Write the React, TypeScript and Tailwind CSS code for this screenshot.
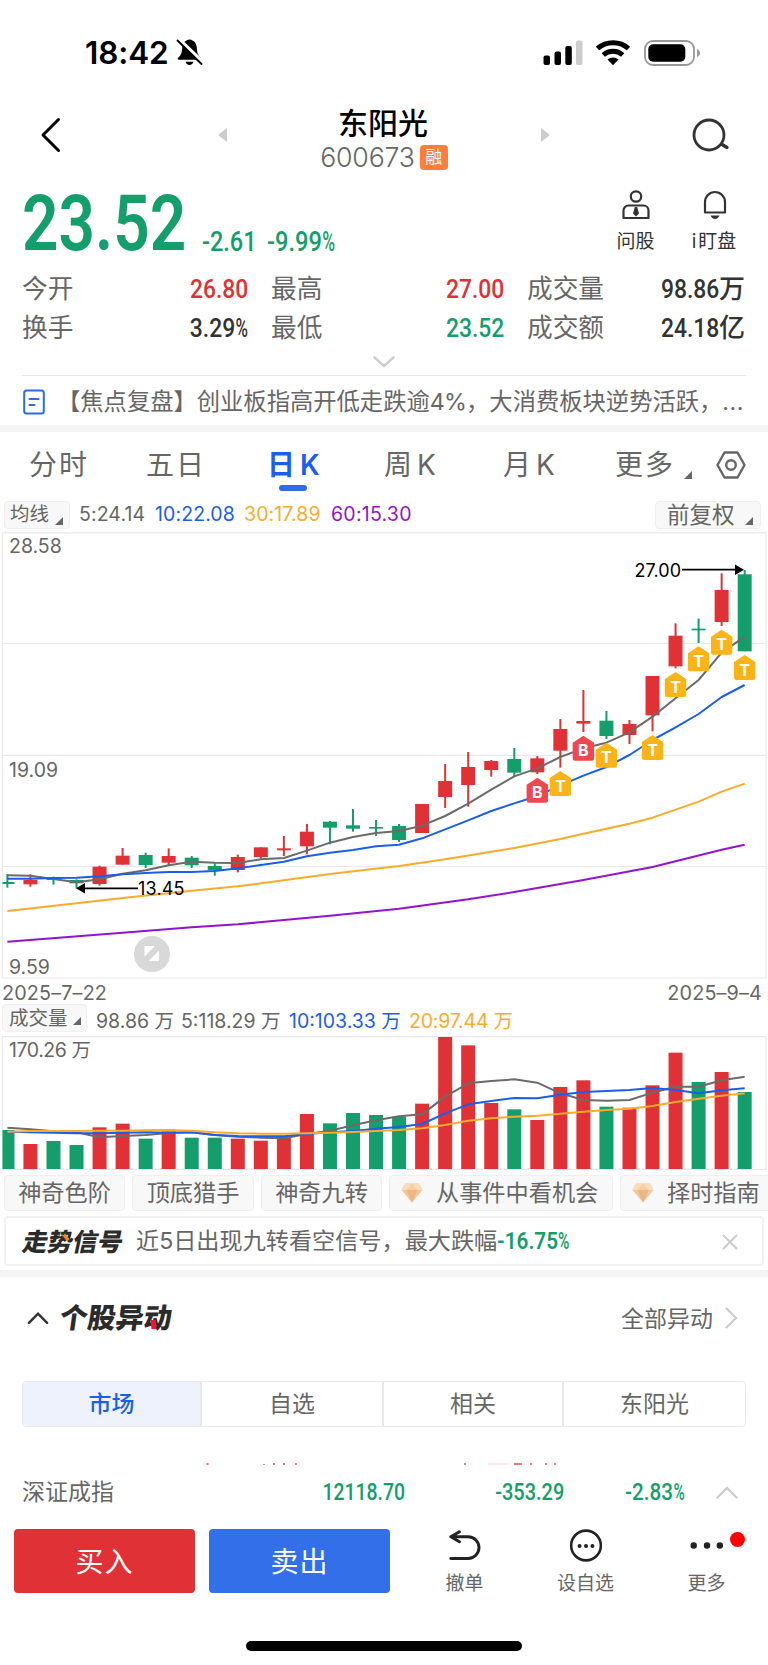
import React from 'react';

const UP = '#e03136';
const DOWN = '#149e6b';

// [color, high, top, bottom, low]
const candles: [string, number, number, number, number][] = [
  [DOWN, 1062, 1086, 1092, 1103],
  [UP, 1063, 1080, 1093, 1100],
  [DOWN, 1070, 1075, 1080, 1094],
  [DOWN, 1078, 1080, 1090, 1105],
  [UP, 1037, 1040, 1092, 1097],
  [UP, 984, 1007, 1034, 1034],
  [DOWN, 998, 1005, 1035, 1044],
  [UP, 985, 1008, 1028, 1035],
  [DOWN, 1008, 1013, 1036, 1044],
  [DOWN, 1030, 1038, 1051, 1067],
  [UP, 1004, 1011, 1050, 1057],
  [UP, 982, 982, 1011, 1017],
  [UP, 948, 985, 991, 1008],
  [UP, 912, 935, 979, 1003],
  [DOWN, 903, 905, 923, 973],
  [DOWN, 867, 916, 926, 935],
  [DOWN, 900, 921, 926, 948],
  [DOWN, 912, 918, 960, 966],
  [UP, 852, 852, 939, 939],
  [UP, 732, 783, 831, 864],
  [UP, 696, 741, 795, 860],
  [UP, 720, 723, 750, 770],
  [DOWN, 684, 717, 758, 768],
  [UP, 708, 715, 757, 762],
  [UP, 597, 627, 692, 743],
  [UP, 510, 603, 611, 636],
  [DOWN, 573, 602, 648, 657],
  [UP, 600, 612, 645, 672],
  [UP, 468, 468, 586, 634],
  [UP, 310, 347, 439, 445],
  [DOWN, 296, 326, 331, 369],
  [UP, 160, 210, 306, 318],
  [DOWN, 150, 163, 394, 394],
];

const volumes = [
  480, 522, 513, 525, 472, 461, 506, 484, 503, 503, 506, 512, 500, 432, 460, 429, 435, 440, 401, 201, 226, 399, 418,
  450, 351, 331, 410, 413, 346, 248, 336, 306, 366,
];

const ma5 = [
  1066, 1067, 1077, 1087, 1078, 1061, 1051, 1036, 1025, 1028, 1029, 1018, 1014, 992, 968, 951, 939, 933, 917, 888, 851,
  809, 769, 745, 711, 685, 668, 637, 590, 535, 480, 398, 350,
];
const ma10 = [
  1076, 1076, 1074, 1073, 1069, 1063, 1059, 1056, 1056, 1053, 1045, 1035, 1025, 1009, 998, 990, 979, 974, 955, 928, 901,
  873, 850, 828, 796, 767, 741, 705, 660, 622, 582, 531, 495,
];
const ma30: [number, number][] = [
  [0, 1173], [3, 1150], [5, 1134], [8, 1112], [10, 1099], [12, 1081], [14, 1062], [17, 1038], [19, 1018], [21, 995],
  [22, 984], [24, 957], [25, 941], [27, 911], [28, 893], [30, 845], [31, 815], [32, 791],
];
const ma60: [number, number][] = [
  [0, 1265], [5, 1238], [8, 1222], [10, 1213], [12, 1200], [14, 1187], [17, 1166], [20, 1138], [22, 1116], [25, 1080],
  [28, 1041], [31, 989], [32, 974],
];

const vol5 = [
  473, 478, 484, 487, 502, 498, 495, 489, 487, 495, 500, 503, 505, 492, 482, 466, 451, 439, 433, 380, 340, 333, 328, 338,
  370, 390, 392, 390, 368, 350, 350, 331, 320,
];
const vol10 = [
  485, 487, 488, 490, 490, 488, 487, 488, 487, 495, 498, 499, 499, 492, 487, 483, 476, 471, 462, 430, 403, 393, 384, 385,
  374, 366, 363, 360, 354, 360, 370, 361, 355,
];
const vol20 = [
  485, 483, 483, 483, 482, 482, 481, 480, 482, 487, 490, 491, 491, 490, 488, 486, 483, 480, 475, 465, 452, 445, 440, 437,
  431, 425, 420, 416, 408, 396, 386, 377, 370,
];

// [candle index, letter, top]
const markers: [number, string, number][] = [
  [23, 'B', 773],
  [24, 'T', 753],
  [25, 'B', 647],
  [26, 'T', 668],
  [28, 'T', 645],
  [29, 'T', 456],
  [30, 'T', 379],
  [31, 'T', 329],
  [32, 'T', 405],
];

const cx = (i: number) => 7.4 + 23.04 * i;
const py = (v: number) => v / 3 - 12;
const vy = (v: number) => v / 3 - 66;

const linePoints = (data: number[], y: (v: number) => number) => data.map((v, i) => `${cx(i)},${y(v)}`).join(' ');
const pairPoints = (data: [number, number][]) => data.map(([i, v]) => `${cx(i)},${py(v)}`).join(' ');

const Corner: React.FC<{ className?: string }> = ({ className = '' }) => (
  <svg className={className} width="8" height="8" viewBox="0 0 8 8">
    <path d="M8 0V8H0Z" fill="#666" />
  </svg>
);

// Condensed figures, with an even narrower percent sign
const Num: React.FC<{ value: string; className?: string }> = ({ value, className = '' }) => (
  <span className={`inline-block whitespace-nowrap font-['Roboto',sans-serif] ${className}`}>
    {value.replace('%', '')}
    {value.endsWith('%') && <span className="-mr-[0.2em] inline-block origin-left scale-x-[0.740]">%</span>}
  </span>
);

const StatusBar: React.FC = () => (
  <div className="flex h-[102px] items-center pt-[3px] pl-[85px] pr-[67px]">
    <span className="w-[91px] text-[31.5px] font-semibold leading-none tracking-[-0.1px] text-black">18:42</span>
    <svg width="27" height="28" viewBox="0 0 27 28" className="-mt-[2px]">
      <path d="M13.500 1.500c-4.500.600-7 3.600-7.300 8.300-.2 5-1.300 7.700-4 9.900-.8.700-.5 2.100.7 2.100h21.200c1.200 0 1.500-1.400.7-2.100-2.700-2.200-3.800-4.900-4-9.900-.3-4.700-2.800-7.700-7.300-8.300Z" fill="#000" />
      <path d="M9.500 23.800h8c-.5 2-2 3.200-4 3.200s-3.500-1.200-4-3.200Z" fill="#000" />
      <path d="M2.500 1 27 24.500" stroke="#fff" strokeWidth="4" />
      <path d="M1.500 2.500 25.500 26" stroke="#000" strokeWidth="1.900" strokeLinecap="round" />
    </svg>
    <div className="ml-auto flex items-center">
      <svg width="40" height="26" viewBox="0 0 40 26">
        <rect x="0.500" y="15.500" width="6.500" height="9.500" rx="2" />
        <rect x="11.500" y="11.500" width="6.500" height="13.500" rx="2" />
        <rect x="22.300" y="6" width="6.500" height="19" rx="2" />
        <rect x="33" y="0.500" width="6.500" height="24.500" rx="2" fill="#ccc" />
      </svg>
      <svg className="ml-[12px]" width="36" height="26" viewBox="0 0 36 26" fill="none">
        <path d="M2.500 8.500C11 .8 25 .8 33.500 8.500" stroke="#000" strokeWidth="5" />
        <path d="M8.300 15c5.500-5 13.900-5 19.400 0" stroke="#000" strokeWidth="4.800" />
        <path d="M12.500 19.600c3-2.700 8-2.700 11 0L18 25.200Z" fill="#000" />
      </svg>
      <svg className="ml-[13px]" width="57" height="26" viewBox="0 0 57 26">
        <rect x="1" y="1" width="49" height="24" rx="8" fill="none" stroke="#999" strokeWidth="1.800" />
        <rect x="4.300" y="4.300" width="37" height="17.400" rx="5" />
        <path d="M53 9c4 1.500 4 6.500 0 8Z" fill="#999" />
      </svg>
    </div>
  </div>
);

const Header: React.FC = () => (
  <div className="flex h-[68px] items-start pt-[2px]">
    <svg className="ml-[40px] mt-[13px]" width="22" height="36" viewBox="0 0 22 36" fill="none">
      <path d="M18.500 2.500 3 18 18.500 33.500" stroke="#000" strokeWidth="3" strokeLinecap="round" strokeLinejoin="round" />
    </svg>
    <svg className="ml-[156px] mt-[24px]" width="9" height="14" viewBox="0 0 9 14">
      <path d="M9 0V14L0 7Z" fill="#ccc" />
    </svg>
    <div className="flex w-[314px] flex-col items-center">
      <h1 className="-ml-[2px] text-[30px] font-medium leading-[38px] text-black">东阳光</h1>
      <div className="mt-[1px] flex h-[29px] items-center gap-[5px]">
        <span className="text-[26.700px] font-light leading-none tracking-[-0.2px] text-[#666]">600673</span>
        <span className="flex h-[25px] w-[28px] items-center justify-center rounded-[4px] bg-[#ff7e3e] text-[17px] leading-none text-white">融</span>
      </div>
    </div>
    <svg className="mt-[24px]" width="9" height="14" viewBox="0 0 9 14">
      <path d="M0 0V14L9 7Z" fill="#ccc" />
    </svg>
    <svg className="ml-[142px] mt-[14px]" width="38" height="36" viewBox="0 0 38 36" fill="none">
      <circle cx="17" cy="17" r="15" stroke="#333" strokeWidth="2.800" />
      <path d="M30 26.500 35 29.500" stroke="#333" strokeWidth="3.400" strokeLinecap="round" />
    </svg>
  </div>
);

const Quote: React.FC = () => (
  <div className="flex h-[99px] pl-[22px] text-[#149e6b]">
    <Num value="23.52" className="mt-[14px] w-[180px] origin-left scale-x-[0.830] text-[77px] font-semibold leading-[80px]" />
    <Num value="-2.61" className="mt-[54px] w-[65px] origin-left scale-x-[0.870] text-[27px] font-medium leading-[36px]" />
    <Num value="-9.99%" className="mt-[54px] w-[80px] origin-left scale-x-[0.875] text-[27px] font-medium leading-[36px]" />
    <div className="ml-auto mr-[31px] flex gap-[36px] text-[#333]">
      <div className="flex w-[39px] flex-col items-center pt-[20px]">
        <svg width="28" height="30" viewBox="0 0 28 30" fill="none" stroke="#333" strokeWidth="2.200">
          <circle cx="14" cy="6.500" r="5.200" />
          <path d="M1.500 28V20.500a5 5 0 0 1 5-5h15a5 5 0 0 1 5 5V28Z" strokeLinejoin="round" />
          <path d="M12.800 17h2.400l1.800 6.500L14 26.500l-3-3Z" fill="#333" stroke="none" />
        </svg>
        <span className="mt-[12px] text-[19px] leading-[20px]">问股</span>
      </div>
      <div className="flex w-[46px] flex-col items-center pt-[20px]">
        <svg className="ml-[2px]" width="24" height="30" viewBox="0 0 24 30" fill="none">
          <path d="M2 22.500V12a10 10 0 0 1 20 0v10.500Z" stroke="#333" strokeWidth="2.200" strokeLinejoin="round" />
          <path d="M7.500 25.500h9c-1 2.300-2.500 3.500-4.500 3.500s-3.500-1.200-4.500-3.500Z" fill="#333" />
        </svg>
        <span className="mt-[12px] whitespace-nowrap text-[19px] leading-[20px]">
          <span className="mr-[2px]">i</span>盯盘
        </span>
      </div>
    </div>
  </div>
);

const stats = [
  { label: '今开', value: '26.80', color: 'text-[#e03136]' },
  { label: '最高', value: '27.00', color: 'text-[#e03136]' },
  { label: '成交量', value: '98.86', unit: '万', color: 'text-[#333]' },
  { label: '换手', value: '3.29%', color: 'text-[#333]' },
  { label: '最低', value: '23.52', color: 'text-[#149e6b]' },
  { label: '成交额', value: '24.18', unit: '亿', color: 'text-[#333]' },
];

const Stats: React.FC = () => (
  <div className="grid grid-cols-[226px_233px_218px] gap-x-[23px] pl-[22px]">
    {stats.map((s) => (
      <div key={s.label} className="flex h-[39px] items-center justify-between">
        <span className="text-[25.700px] leading-none text-[#666]">{s.label}</span>
        <span className={`flex items-center font-medium ${s.color}`}>
          <Num value={s.value} className="origin-right scale-x-[0.880] text-[26px] leading-none" />
          {s.unit && <span className="text-[26px] leading-none">{s.unit}</span>}
        </span>
      </div>
    ))}
  </div>
);

const News: React.FC = () => (
  <div className="mx-[22px]">
    <div className="flex h-[28px] items-center justify-center pt-[2px]">
      <svg width="22" height="12" viewBox="0 0 22 12" fill="none">
        <path d="M1.500 1.500 11 10 20.500 1.500" stroke="#ccc" strokeWidth="2.400" strokeLinecap="round" strokeLinejoin="round" />
      </svg>
    </div>
    <div className="h-px bg-[#e8e8e8]" />
    <div className="flex h-[49px] items-center pt-[2px]">
      <svg className="ml-px" width="22" height="26" viewBox="0 0 22 26" fill="none" stroke="#2f6be6" strokeWidth="2">
        <rect x="1.200" y="1.500" width="19.600" height="23" rx="2.500" />
        <path d="M6.500 10h9M6.500 16h5" strokeLinecap="round" />
      </svg>
      <span className="ml-[12px] whitespace-nowrap text-[23.300px] leading-none text-[#666]">
        【焦点复盘】创业板指高开低走跌逾<span className="tracking-[-0.8px]">4%</span>，大消费板块逆势活跃，<span className="tracking-[0.5px]">...</span>
      </span>
    </div>
  </div>
);

const Periods: React.FC = () => (
  <div className="flex h-[64px] items-center pl-[29px] pt-[2px] text-[28px] leading-none tracking-[2px] text-[#666]">
    <span className="w-[117px]">分时</span>
    <span className="w-[121px]">五日</span>
    <span className="relative w-[117px] font-semibold text-[#1a5eec]">
      日<span className="ml-[3px]">K</span>
      <span className="absolute -bottom-[12px] left-[12px] h-[6px] w-[28px] rounded-full bg-[#2f6be6]" />
    </span>
    <span className="w-[119px]">
      周<span className="ml-[3px]">K</span>
    </span>
    <span className="w-[112px]">
      月<span className="ml-[3px]">K</span>
    </span>
    <span>更多</span>
    <Corner className="ml-[9px] mt-[20px]" />
    <svg className="ml-[24px]" width="30" height="28" viewBox="0 0 30 28" fill="none" stroke="#666" strokeWidth="2.400">
      <path d="M8.500 1.500h13L28.500 14l-7 12.500h-13L1.500 14Z" strokeLinejoin="round" />
      <circle cx="15" cy="14" r="4.800" />
    </svg>
  </div>
);

const MaLegend: React.FC = () => (
  <div className="flex h-[36px] items-center pl-[4px] pr-[7px] pt-[1px] text-[19.500px] leading-none text-[#666]">
    <div className="flex h-[28px] w-[66px] items-center rounded-[4px] border border-[#efefef] bg-[#f8f8f8] pl-[5px] pt-[1px]">
      均线
      <Corner className="ml-[6px] mt-[11px]" />
    </div>
    <span className="ml-[9px] w-[76px] pt-[1px] tracking-[0.1px]">5:24.14</span>
    <span className="w-[89px] pt-[1px] tracking-[0.1px] text-[#1a5eec]">10:22.08</span>
    <span className="w-[87px] pt-[1px] tracking-[0.1px] text-[#fbaa2c]">30:17.89</span>
    <span className="pt-[1px] tracking-[0.250px] text-[#9313ce]">60:15.30</span>
    <div className="ml-auto flex h-[28px] w-[106px] items-center rounded-[4px] border border-[#efefef] bg-[#f8f8f8] pl-[11px] pt-[1px] text-[22.500px]">
      前复权
      <Corner className="ml-[10px] mt-[11px]" />
    </div>
  </div>
);

const PriceChart: React.FC = () => (
  <svg className="block overflow-visible" width="768" height="447" viewBox="0 0 768 447" fontFamily="Inter, sans-serif">
    <path d="M2.500 .8H766V446H2.500ZM2.500 111.500H766M2.500 223.300H766M2.500 334.500H766" fill="none" stroke="#e9e9e9" strokeWidth="1.200" />
    <text x="9" y="21" fontSize="19.500" fill="#666">28.58</text>
    <text x="9" y="244.500" fontSize="19.500" fill="#666">19.09</text>
    <text x="9" y="442" fontSize="19.500" fill="#666">9.59</text>
    {candles.map(([color, high, top, bottom, low], i) => (
      <g key={i} fill={color}>
        <rect x={cx(i) - 1} y={py(high)} width="2" height={(low - high) / 3} />
        <rect x={Math.max(cx(i) - 7, 2.5)} y={py(top)} width={i === 0 ? 12 : 14} height={(bottom - top) / 3} />
      </g>
    ))}
    <g fill="none" strokeWidth="2" strokeLinejoin="round">
      <polyline points={linePoints(ma5, py)} stroke="#6b6b6b" />
      <polyline points={linePoints(ma10, py)} stroke="#1a5eec" />
      <polyline points={pairPoints(ma30)} stroke="#fbaa2c" />
      <polyline points={pairPoints(ma60)} stroke="#9313ce" />
    </g>
    {markers.map(([i, letter, top]) => (
      <g key={i} transform={`translate(${cx(i) - 10.7} ${py(top)})`}>
        <path d="M10.700 0 21.400 7V22.500a2.500 2.500 0 0 1-2.500 2.500H2.500A2.500 2.500 0 0 1 0 22.500V7Z" fill={letter === 'B' ? '#ee474f' : '#fbb417'} />
        <text x="10.700" y="20.500" fontSize="16" fontWeight="700" textAnchor="middle" fill="#fff">{letter}</text>
      </g>
    ))}
    <path d="M682 37.700H736M84 356.300H138" stroke="#000" strokeWidth="1.800" />
    <path d="M735 32.500 744 37.700 735 43ZM85 351 76 356.300 85 361.500Z" />
    <text x="634.500" y="44.500" fontSize="18" textLength="46.500">27.00</text>
    <text x="138" y="363" fontSize="18" textLength="46.500">13.45</text>
    <circle cx="152" cy="422" r="18" fill="#d8d8d8" />
    <path d="M144.500 414H155L144.500 424.500ZM159 418.500V429H148.500Z" fill="#fff" />
  </svg>
);

const VolumeChart: React.FC = () => (
  <>
    <div className="flex h-[25px] items-center justify-between pl-[2px] pr-[6px] pt-[4px] text-[19.800px] leading-none tracking-[0.150px] text-[#666]">
      <span>2025–7–22</span>
      <span>2025–9–4</span>
    </div>
    <div className="flex h-[32px] pl-[2px] text-[19.500px] leading-[34px] text-[#666]">
      <div className="flex h-[28px] w-[85px] items-center rounded-[4px] border border-[#efefef] bg-[#f8f8f8] pl-[6px] pt-[1px] leading-none">
        成交量
        <Corner className="ml-[5px] mt-[5px]" />
      </div>
      <span className="ml-[9px] w-[85px] whitespace-nowrap">98.86 万</span>
      <span className="w-[108px] whitespace-nowrap">5:118.29 万</span>
      <span className="w-[120px] whitespace-nowrap text-[#1a5eec]">10:103.33 万</span>
      <span className="whitespace-nowrap tracking-[-0.2px] text-[#fbaa2c]">20:97.44 万</span>
    </div>
    <svg className="block" width="768" height="135" viewBox="0 0 768 135" fontFamily="Inter, 'Noto Sans CJK SC', sans-serif">
      <path d="M2.500 .6H766V133.500H2.500Z" fill="none" stroke="#e9e9e9" strokeWidth="1.200" />
      <text x="9" y="21" fontSize="19.500" fill="#666" textLength="82">170.26 万</text>
      {volumes.map((v, i) => (
        <rect key={i} x={Math.max(cx(i) - 7, 2.5)} y={vy(v)} width={i === 0 ? 12 : 14} height={(597 - v) / 3} fill={candles[i][0]} />
      ))}
      <g fill="none" strokeWidth="2" strokeLinejoin="round">
        <polyline points={linePoints(vol5, vy)} stroke="#6b6b6b" />
        <polyline points={linePoints(vol10, vy)} stroke="#1a5eec" />
        <polyline points={linePoints(vol20, vy)} stroke="#fbaa2c" />
      </g>
    </svg>
  </>
);

const Diamond: React.FC = () => (
  <svg width="22" height="20" viewBox="0 0 22 20">
    <path d="M4 .5h14l3.500 6.500L11 19.500.5 7Z" fill="#f3c698" />
    <path d="M4 .5h14l3.500 6.500H.5Z" fill="#f9dcbc" />
    <path d="M5.500 7h11L11 19.500Z" fill="#edb680" />
    <path d="M5.500 7 11 .5 16.500 7Z" fill="#f6cfa6" />
  </svg>
);

const tools = [
  { name: '神奇色阶', width: 'w-[121px]' },
  { name: '顶底猎手', width: 'w-[122px]' },
  { name: '神奇九转', width: 'w-[121px]' },
  { name: '从事件中看机会', width: 'w-[224px]', paid: true },
  { name: '择时指南', width: 'w-[154px]', paid: true },
];

const Tools: React.FC = () => (
  <div className="flex h-[40px] gap-[7px] overflow-hidden pl-[4px] pt-[4px]">
    {tools.map((t) => (
      <div
        key={t.name}
        className={`flex h-[36px] shrink-0 items-center rounded-[4px] border border-[#efefef] bg-[#f8f8f8] text-[23.200px] leading-none text-[#666] ${t.width} ${
          t.paid ? 'gap-[13px] pl-[11px]' : 'justify-center'
        }`}
      >
        {t.paid && <Diamond />}
        <span className="whitespace-nowrap pt-[1px]">{t.name}</span>
      </div>
    ))}
  </div>
);

const Signal: React.FC = () => (
  <div className="mx-[4px] mb-[4px] mt-[5px] flex h-[50px] items-center rounded-[4px] border-2 border-[#f1f1f1] pl-[17px] pr-[24px] pt-[2px]">
    <span className="relative -skew-x-12 text-[25px] font-black leading-none text-[#2b2b2b]">
      走势信号
      <span className="absolute left-[38px] top-[6px] h-[3px] w-[8px] rotate-45 bg-[#f5851f]" />
    </span>
    <span className="ml-[13px] whitespace-nowrap text-[23.150px] leading-none text-[#666]">近5日出现九转看空信号，最大跌幅</span>
    <Num value="-16.75%" className="origin-left scale-x-[0.885] text-[23.500px] font-semibold leading-none text-[#149e6b]" />
    <svg className="ml-auto" width="16" height="16" viewBox="0 0 16 16">
      <path d="M1.500 1.500 14.500 14.500M14.500 1.500 1.500 14.500" stroke="#ccc" strokeWidth="2" strokeLinecap="round" />
    </svg>
  </div>
);

const tabs = [
  { name: '市场', style: 'w-[177px] bg-[#edf2fd] font-medium text-[#1a5eec]' },
  { name: '自选', style: 'w-[182px] border-l-2 text-[#666]' },
  { name: '相关', style: 'w-[180px] border-l-2 text-[#666]' },
  { name: '东阳光', style: 'grow border-l-2 text-[#666]' },
];

const Moves: React.FC = () => (
  <div className="px-[22px]">
    <div className="flex h-[82px] items-center">
      <svg className="ml-[5px]" width="22" height="14" viewBox="0 0 23 14" fill="none">
        <path d="M2 12 11.500 2.500 21 12" stroke="#333" strokeWidth="2.600" strokeLinecap="round" />
      </svg>
      <h2 className="relative ml-[11px] -skew-x-8 text-[28px] font-black leading-none text-[#2b2b2b]">
        个股异动
        <span className="absolute bottom-[3px] left-[92px] h-[9px] w-[5px] skew-x-12 bg-[#fb1230]" />
      </h2>
      <span className="ml-auto pt-[2px] text-[23px] leading-none text-[#666]">全部异动</span>
      <svg className="ml-[12px] mr-[8px]" width="13" height="22" viewBox="0 0 13 22" fill="none">
        <path d="M1.500 1.500 11 11 1.500 20.500" stroke="#ccc" strokeWidth="2.200" strokeLinecap="round" />
      </svg>
    </div>
    <div className="mt-[22px] flex h-[46px] overflow-hidden rounded-[4px] border border-[#e8e8e8]">
      {tabs.map((t) => (
        <div key={t.name} className={`flex items-center justify-center border-[#e8e8e8] pt-[1px] text-[23px] leading-none ${t.style}`}>
          {t.name}
        </div>
      ))}
    </div>
    <svg className="mt-[36px] block" width="724" height="2" viewBox="22 0 724 2" fill="#e9767a">
      <path d="M206.500 0h2v2h-2ZM263 1h2v1h-2ZM273 0h2v2h-2ZM283 0h2v2h-2ZM295 0h2v2h-2ZM464 0h2v2h-2ZM514 0h8v2h-8ZM530 0h2v2h-2ZM545 0h2v2h-2ZM554 0h2v2h-2Z" />
      <path d="M488 .5h20v1h-20Z" opacity="0.300" />
    </svg>
  </div>
);

const IndexBar: React.FC = () => (
  <div className="flex h-[52px] items-center px-[22px] pt-[2px]">
    <span className="w-[92px] whitespace-nowrap text-[23px] leading-none text-[#666]">深证成指</span>
    <div className="flex text-[23.500px] font-medium leading-none text-[#149e6b]">
      <span className="w-[291px] text-right"><Num value="12118.70" className="origin-right scale-x-[0.825]" /></span>
      <span className="w-[159px] text-right"><Num value="-353.29" className="origin-right scale-x-[0.850]" /></span>
      <span className="w-[120px] text-right"><Num value="-2.83%" className="origin-right scale-x-[0.880]" /></span>
    </div>
    <svg className="ml-auto mr-[8px]" width="22" height="13" viewBox="0 0 22 13" fill="none">
      <path d="M1.500 11.500 11 2 20.500 11.500" stroke="#ccc" strokeWidth="2.400" strokeLinecap="round" />
    </svg>
  </div>
);

const Actions: React.FC = () => (
  <div className="mt-[12px] flex h-[64px] pl-[14px]">
    <button className="h-[64px] w-[181px] rounded-[4px] bg-[#e03136] pt-[2px] text-[28px] leading-none tracking-[1px] text-white">买入</button>
    <button className="ml-[14px] h-[64px] w-[181px] rounded-[4px] bg-[#336fe8] pt-[2px] text-[28px] leading-none tracking-[1px] text-white">卖出</button>
    <div className="ml-[46px] flex w-[57px] flex-col items-center text-[19px] leading-none text-[#666]">
      <svg width="36" height="36" viewBox="0 0 36 36" fill="none" stroke="#222" strokeWidth="3.200" strokeLinecap="round" strokeLinejoin="round">
        <path d="M12 3 2.500 8.500 12 14M3 8.500h18.500a11.800 11.800 0 0 1 0 23.600H2.500" />
      </svg>
      <span className="mt-[12px]">撤单</span>
    </div>
    <div className="ml-[64px] flex w-[58px] flex-col items-center text-[19px] leading-none text-[#666]">
      <svg width="36" height="36" viewBox="0 0 36 36">
        <circle cx="18" cy="18" r="16.200" fill="none" stroke="#222" strokeWidth="2.800" />
        <path d="M11 18.500h.01M18 18.500h.01M25 18.500h.01" stroke="#222" strokeWidth="4.400" strokeLinecap="round" />
      </svg>
      <span className="-ml-[1px] mt-[12px] whitespace-nowrap">设自选</span>
    </div>
    <div className="relative ml-[63px] flex w-[58px] flex-col items-center text-[19px] leading-none text-[#666]">
      <svg width="36" height="36" viewBox="0 0 36 36">
        <path d="M3.500 18h.01M18 18h.01M32 18h.01" stroke="#222" strokeWidth="7" strokeLinecap="round" />
      </svg>
      <span className="-ml-[1px] mt-[12px]">更多</span>
      <span className="absolute left-[52px] top-[3px] h-[15px] w-[15px] rounded-full bg-[#ff0000]" />
    </div>
  </div>
);

const App: React.FC = () => {
  return (
    <div className="h-[1665px] w-[768px] overflow-hidden bg-white font-['Inter','Noto_Sans_CJK_SC',sans-serif]">
      <StatusBar />
      <Header />
      <Quote />
      <Stats />
      <News />
      <div className="h-[7px] bg-[#f4f4f4]" />
      <Periods />
      <MaLegend />
      <PriceChart />
      <VolumeChart />
      <Tools />
      <Signal />
      <div className="h-[7px] bg-[#f4f4f4]" />
      <Moves />
      <IndexBar />
      <Actions />
      <div className="mx-auto mt-[48px] h-[10px] w-[276px] rounded-full bg-black" />
    </div>
  );
};

export default App;
